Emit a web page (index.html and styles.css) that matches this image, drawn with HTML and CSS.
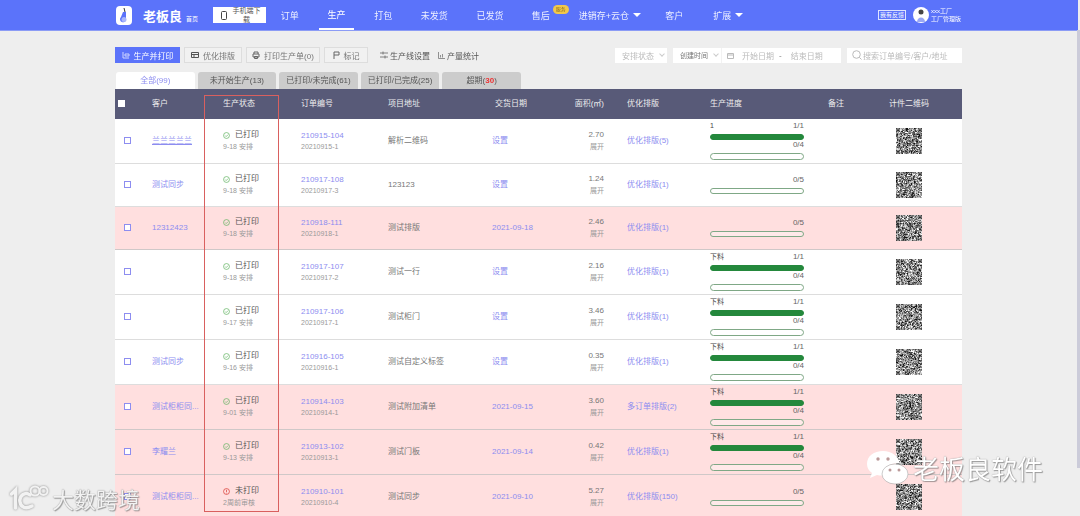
FILE: index.html
```html
<!DOCTYPE html>
<html lang="zh">
<head>
<meta charset="utf-8">
<title>老板良</title>
<link rel="stylesheet" href="styles.css">
</head>
<body>
<svg class="defs" width="0" height="0">
  <symbol id="ok" viewBox="0 0 10 10"><circle cx="5" cy="5" r="4.2" fill="none" stroke="#5fb25f"/><path d="M3 5l1.5 1.5L7.2 3.8" fill="none" stroke="#5fb25f"/></symbol>
  <symbol id="warn" viewBox="0 0 10 10"><circle cx="5" cy="5" r="4.2" fill="none" stroke="#d9362f"/><path d="M5 2.5v3.2M5 6.8v1" fill="none" stroke="#d9362f"/></symbol>
</svg>
<div class="app">
  <header class="nav">
    <div class="logo"><svg width="16" height="19" viewBox="0 0 16 19"><rect width="16" height="19" rx="4" fill="#fff"/><path d="M8 2l1 4-1 1" stroke="#333" fill="none"/><path d="M7 6h3v7a3 3 0 1 1-5-2" fill="#5b73fa"/><circle cx="8" cy="13.500" r="2.500" fill="#a9b6fb"/></svg></div>
    <span class="brand">老板良</span>
    <span class="home">首页</span>
    <div class="download"><svg width="6" height="9" viewBox="0 0 6 9"><rect x=".5" y=".5" width="5" height="8" rx="1" fill="none" stroke="#444"/></svg><span class="download-text">手机端下载</span></div>
    <nav class="menu">
      <a class="menu-item w-order">订单</a>
      <a class="menu-item active">生产</a>
      <a class="menu-item w-pack">打包</a>
      <a class="menu-item w-un">未发货</a>
      <a class="menu-item w-sent">已发货</a>
      <a class="menu-item w-after">售后<span class="badge">服务</span></a>
      <a class="menu-item w-store">进销存+云仓<i class="caret"></i></a>
      <a class="menu-item w-client">客户</a>
      <a class="menu-item w-ext">扩展<i class="caret"></i></a>
    </nav>
    <span class="feedback">我有反馈</span>
    <div class="avatar"><svg width="16" height="16" viewBox="0 0 16 16"><circle cx="8" cy="8" r="8" fill="#fff"/><circle cx="8" cy="5" r="2.500" fill="#444"/><path d="M4 15c0-6 8-6 8 0z" fill="#9aa8f5"/></svg></div>
    <div class="user"><span>xxx工厂</span><span>工厂管理版</span></div>
  </header>

  <main class="page">
    <div class="toolbar">
      <button class="tool primary w1"><svg width="8" height="8" viewBox="0 0 8 8"><path d="M1 1v6h6M3 3h4v2H3z" fill="none" stroke="#cfd6ff"/></svg>生产并打印</button>
      <button class="tool w2"><svg width="8" height="8" viewBox="0 0 8 8"><path d="M.5 1.500h7v5h-7zM.5 3.500h7M3 3.500v3" fill="none" stroke="#555"/></svg>优化排版</button>
      <button class="tool w3"><svg width="8" height="8" viewBox="0 0 8 8"><path d="M2 3V1h4v2M1 3h6v3H1zM2.500 5.500h3v2h-3z" fill="none" stroke="#666"/></svg>打印生产单(0)</button>
      <button class="tool w4"><svg width="7" height="8" viewBox="0 0 7 8"><path d="M1 8V1h5v3H1" fill="none" stroke="#666"/></svg>标记</button>
      <a class="tool-link l1"><svg width="8" height="8" viewBox="0 0 8 8"><path d="M0 2h8M0 6h8M3 .5v3M5 4.500v3" fill="none" stroke="#666" stroke-width=".8"/></svg>生产线设置</a>
      <a class="tool-link"><svg width="7" height="7" viewBox="0 0 7 7"><path d="M.5 0v6.500H7M2.500 3v2.500M4.500 2v3.500" fill="none" stroke="#777" stroke-width=".8"/></svg>产量统计</a>
      <div class="filters">
        <div class="field f-status">安排状态<i class="chev"></i></div>
        <div class="date-group">
          <div class="field f-time">创建时间<i class="chev"></i></div>
          <div class="field f-date"><svg width="7" height="7" viewBox="0 0 7 7"><path d="M.5 1.500h6v5h-6zM.5 3h6" fill="none" stroke="#bbb"/></svg><span>开始日期</span><b>-</b><span>结束日期</span></div>
        </div>
        <div class="field f-search"><svg width="10" height="10" viewBox="0 0 10 10"><circle cx="4.500" cy="4.500" r="3.800" fill="none" stroke="#bbb"/><path d="M7.300 7.300L9.500 9.500" stroke="#bbb"/></svg>搜索订单编号/客户/地址</div>
      </div>
    </div>

    <div class="tabs">
      <a class="tab current">全部(99)</a>
      <a class="tab">未开始生产(13)</a>
      <a class="tab">已打印/未完成(61)</a>
      <a class="tab">已打印/已完成(25)</a>
      <a class="tab">超期(<em>30</em>)</a>
    </div>

    <section class="table">
      <div class="row head">
        <div class="c-check"><i class="box solid"></i></div>
        <div>客户</div><div>生产状态</div><div>订单编号</div><div>项目地址</div><div class="h-date">交货日期</div>
        <div class="c-area">面积(㎡)</div><div class="c-plan">优化排版</div><div>生产进度</div><div class="c-center">备注</div><div class="c-qr">计件二维码</div>
      </div>

      <div class="row tall">
        <div class="c-check"><i class="box"></i></div><div class="link under">兰兰兰兰兰</div>
        <div><div class="st"><svg class="ico"><use href="#ok"/></svg>已打印</div><div class="sub">9-18 安排</div></div>
        <div><div class="no">210915-104</div><div class="sub num">20210915-1</div></div><div class="addr">解析二维码</div><div class="link">设置</div>
        <div class="c-area"><div class="amt">2.70</div><div class="sub">展开</div></div><div class="c-plan link">优化排版(5)</div>
        <div class="prog"><div class="lab"><span>1</span><span>1/1</span></div><div class="bar full"></div><div class="lab"><span></span><span>0/4</span></div><div class="bar"></div></div>
        <div></div><div class="c-qr"><div class="qr"></div></div>
      </div>

      <div class="row short">
        <div class="c-check"><i class="box"></i></div><div class="link">测试同步</div>
        <div><div class="st"><svg class="ico"><use href="#ok"/></svg>已打印</div><div class="sub">9-18 安排</div></div>
        <div><div class="no">210917-108</div><div class="sub num">20210917-3</div></div><div class="addr">123123</div><div class="link">设置</div>
        <div class="c-area"><div class="amt">1.24</div><div class="sub">展开</div></div><div class="c-plan link">优化排版(1)</div>
        <div class="prog"><div class="lab"><span></span><span>0/5</span></div><div class="bar"></div></div>
        <div></div><div class="c-qr"><div class="qr"></div></div>
      </div>

      <div class="row short late">
        <div class="c-check"><i class="box"></i></div><div class="link">12312423</div>
        <div><div class="st"><svg class="ico"><use href="#ok"/></svg>已打印</div><div class="sub">9-18 安排</div></div>
        <div><div class="no">210918-111</div><div class="sub num">20210918-1</div></div><div class="addr">测试排版</div><div class="link">2021-09-18</div>
        <div class="c-area"><div class="amt">2.46</div><div class="sub">展开</div></div><div class="c-plan link">优化排版(1)</div>
        <div class="prog"><div class="lab"><span></span><span>0/5</span></div><div class="bar"></div></div>
        <div></div><div class="c-qr"><div class="qr"></div></div>
      </div>

      <div class="row tall">
        <div class="c-check"><i class="box"></i></div><div class="link"></div>
        <div><div class="st"><svg class="ico"><use href="#ok"/></svg>已打印</div><div class="sub">9-18 安排</div></div>
        <div><div class="no">210917-107</div><div class="sub num">20210917-2</div></div><div class="addr">测试一行</div><div class="link">设置</div>
        <div class="c-area"><div class="amt">2.16</div><div class="sub">展开</div></div><div class="c-plan link">优化排版(1)</div>
        <div class="prog"><div class="lab"><span>下料</span><span>1/1</span></div><div class="bar full"></div><div class="lab"><span></span><span>0/4</span></div><div class="bar"></div></div>
        <div></div><div class="c-qr"><div class="qr"></div></div>
      </div>

      <div class="row tall">
        <div class="c-check"><i class="box"></i></div><div class="link"></div>
        <div><div class="st"><svg class="ico"><use href="#ok"/></svg>已打印</div><div class="sub">9-17 安排</div></div>
        <div><div class="no">210917-106</div><div class="sub num">20210917-1</div></div><div class="addr">测试柜门</div><div class="link">设置</div>
        <div class="c-area"><div class="amt">3.46</div><div class="sub">展开</div></div><div class="c-plan link">优化排版(1)</div>
        <div class="prog"><div class="lab"><span>下料</span><span>1/1</span></div><div class="bar full"></div><div class="lab"><span></span><span>0/4</span></div><div class="bar"></div></div>
        <div></div><div class="c-qr"><div class="qr"></div></div>
      </div>

      <div class="row tall">
        <div class="c-check"><i class="box"></i></div><div class="link">测试同步</div>
        <div><div class="st"><svg class="ico"><use href="#ok"/></svg>已打印</div><div class="sub">9-16 安排</div></div>
        <div><div class="no">210916-105</div><div class="sub num">20210916-1</div></div><div class="addr">测试自定义标签</div><div class="link">设置</div>
        <div class="c-area"><div class="amt">0.35</div><div class="sub">展开</div></div><div class="c-plan link">优化排版(1)</div>
        <div class="prog"><div class="lab"><span>下料</span><span>1/1</span></div><div class="bar full"></div><div class="lab"><span></span><span>0/4</span></div><div class="bar"></div></div>
        <div></div><div class="c-qr"><div class="qr"></div></div>
      </div>

      <div class="row tall late">
        <div class="c-check"><i class="box"></i></div><div class="link">测试柜柜同...</div>
        <div><div class="st"><svg class="ico"><use href="#ok"/></svg>已打印</div><div class="sub">9-01 安排</div></div>
        <div><div class="no">210914-103</div><div class="sub num">20210914-1</div></div><div class="addr">测试附加清单</div><div class="link">2021-09-15</div>
        <div class="c-area"><div class="amt">3.60</div><div class="sub">展开</div></div><div class="c-plan link">多订单排版(2)</div>
        <div class="prog"><div class="lab"><span>下料</span><span>1/1</span></div><div class="bar full"></div><div class="lab"><span></span><span>0/4</span></div><div class="bar"></div></div>
        <div></div><div class="c-qr"><div class="qr"></div></div>
      </div>

      <div class="row tall late">
        <div class="c-check"><i class="box"></i></div><div class="link">李耀兰</div>
        <div><div class="st"><svg class="ico"><use href="#ok"/></svg>已打印</div><div class="sub">9-13 安排</div></div>
        <div><div class="no">210913-102</div><div class="sub num">20210913-1</div></div><div class="addr">测试门板</div><div class="link">2021-09-14</div>
        <div class="c-area"><div class="amt">0.42</div><div class="sub">展开</div></div><div class="c-plan link">优化排版(1)</div>
        <div class="prog"><div class="lab"><span>下料</span><span>1/1</span></div><div class="bar full"></div><div class="lab"><span></span><span>0/4</span></div><div class="bar"></div></div>
        <div></div><div class="c-qr"><div class="qr"></div></div>
      </div>

      <div class="row tall late">
        <div class="c-check"><i class="box"></i></div><div class="link">测试柜柜同...</div>
        <div><div class="st"><svg class="ico"><use href="#warn"/></svg>未打印</div><div class="sub">2周前审核</div></div>
        <div><div class="no">210910-101</div><div class="sub num">20210910-4</div></div><div class="addr">测试同步</div><div class="link">2021-09-10</div>
        <div class="c-area"><div class="amt">5.27</div><div class="sub">展开</div></div><div class="c-plan link">优化排版(150)</div>
        <div class="prog"><div class="lab"><span></span><span>0/5</span></div><div class="bar"></div></div>
        <div></div><div class="c-qr"><div class="qr"></div></div>
      </div>

      <div class="marker"></div>
    </section>
  </main>

  <div class="scrollbar"></div>

  <div class="mark mark-left">
    <svg width="40" height="28" viewBox="0 0 40 28"><g fill="none" stroke="#f2f2f2" stroke-width="3.500" stroke-linecap="round"><path d="M2.500 10l4-4v18"/><path d="M21 11c-5-4-11 1-10 7s6 7 12 4"/></g><g fill="none" stroke="#f2f2f2" stroke-width="2"><circle cx="26" cy="7" r="4.500"/><circle cx="34.500" cy="7" r="4"/></g></svg>
    <span>大数跨境</span>
  </div>
  <div class="mark mark-right">
    <svg width="44" height="36" viewBox="0 0 44 36"><path d="M17 1C8 1 1 6 1 14c0 4 2 7 5 9l-2 5 7-3c2 .5 3 .5 5 .5 1-8 8-13 18-12C32 6 26 1 17 1z" fill="#fff"/><ellipse cx="29" cy="24" rx="13" ry="10" fill="#fff" stroke="#aaa" stroke-width=".6"/><circle cx="12" cy="9" r="1.700" fill="#b99"/><circle cx="22" cy="9" r="1.700" fill="#b99"/><circle cx="24" cy="20" r="1.500" fill="#b99"/><circle cx="33" cy="20" r="1.500" fill="#b99"/></svg>
    <span>老板良软件</span>
  </div>
</div>
<script src="qr.js"></script>
</body>
</html>
```
FILE: styles.css
```css
* { box-sizing: border-box; }
html, body { margin: 0; height: 516px; overflow: hidden; }
body {
  background: #eee;
  font-family: "Liberation Sans", "Noto Sans CJK SC", sans-serif;
  color: #555;
  font-size: 8px;
}
.defs { position: absolute; }
.app { position: relative; height: 516px; overflow: hidden; filter: blur(.35px); }

/* nav */
.nav {
  height: 31px;
  width: 1078px;
  background: #5b73fa;
  border-bottom: 1px solid #8b9bf5;
  display: flex;
  align-items: center;
  padding: 0 116px;
  color: #fff;
}
.logo { width: 16px; height: 19px; }
.logo svg { display: block; }
.brand { margin-left: 11px; font-size: 13px; font-weight: 700; width: 38px; white-space: nowrap; }
.home { margin-left: 5px; font-size: 6px; width: 12px; margin-top: 6px; white-space: nowrap; }
.download {
  margin-left: 15px;
  width: 53px;
  height: 16px;
  background: #fff;
  display: flex;
  align-items: center;
  padding-left: 8px;
  gap: 5px;
  color: #555;
}
.download-text { width: 29px; font-size: 7px; line-height: 9px; text-align: center; margin-top: -1px; }
.menu { display: flex; height: 30px; margin-left: 6px; width: 472px; flex: none; }
.menu-item {
  position: relative;
  display: flex;
  align-items: center;
  justify-content: center;
  height: 30px;
  font-size: 9px;
  color: #eef0ff;
  white-space: nowrap;
}
.menu-item:first-child { width: 36px; margin-left: 0; }
.active { width: 36px; margin-left: 11px; border-bottom: 2px solid #fff; color: #fff; }
.w-pack { width: 18px; margin-left: 20px; }
.w-un { width: 28px; margin-left: 28px; }
.w-sent { width: 28px; margin-left: 28px; }
.w-after { width: 18px; margin-left: 28px; }
.w-store { width: 64px; margin-left: 29px; justify-content: flex-start; }
.w-client { width: 18px; margin-left: 23px; }
.w-ext { width: 31px; margin-left: 30px; justify-content: flex-start; }
.caret {
  margin-left: 4px;
  border-left: 4px solid transparent;
  border-right: 4px solid transparent;
  border-top: 4px solid #fff;
}
.badge {
  position: absolute;
  left: 21px;
  top: 5px;
  width: 16px;
  height: 9px;
  border-radius: 5px;
  background: #f2c84b;
  color: #8a6d1d;
  font-size: 5px;
  line-height: 9px;
  text-align: center;
}
.feedback {
  margin-left: auto;
  width: 28px;
  height: 10px;
  border: 1px solid #dfe4ff;
  font-size: 6px;
  line-height: 8px;
  text-align: center;
  white-space: nowrap;
}
.avatar { margin-left: 7px; height: 16px; }
.avatar svg { display: block; }
.user { margin-left: 2px; width: 31px; display: flex; flex-direction: column; font-size: 6px; line-height: 8px; white-space: nowrap; }

/* page */
.page { padding-left: 115px; width: 962px; }
.toolbar { display: flex; align-items: center; height: 16px; margin-top: 16px; }
.tool {
  height: 16px;
  padding: 0;
  border: 1px solid #ddd;
  background: #f1f1f1;
  color: #777;
  font: inherit;
  font-size: 8px;
  display: flex;
  align-items: center;
  justify-content: center;
  gap: 4px;
  margin-right: 4px;
  white-space: nowrap;
}
.primary { background: #5b73fa; border-color: #5b73fa; color: #fff; }
.w1 { width: 65px; }
.w2 { width: 58px; }
.w3 { width: 74px; }
.w4 { width: 44px; margin-right: 12px; }
.tool-link { display: flex; align-items: center; gap: 2px; font-size: 8px; color: #555; margin-right: 8px; white-space: nowrap; }
.filters { display: flex; gap: 6px; margin-left: auto; }
.field {
  height: 15px;
  background: #fff;
  color: #bbb;
  display: flex;
  align-items: center;
  font-size: 8px;
  white-space: nowrap;
}
.f-status { width: 52px; padding-left: 7px; }
.date-group { display: flex; }
.f-time { width: 48px; padding-left: 7px; color: #777; font-size: 7px; }
.f-date { width: 120px; padding-left: 5px; gap: 0; border-left: 1px solid #f2f2f2; }
.f-date span:first-of-type { margin-left: 8px; width: 28px; }
.f-date b { font-weight: 400; margin: 0 9px; color: #777; }
.f-search { width: 115px; padding-left: 5px; gap: 1px; }
.chev {
  width: 4px;
  height: 4px;
  margin: -2px 0 0 6px;
  border-right: 1px solid #ccc;
  border-bottom: 1px solid #ccc;
  transform: rotate(45deg);
}

/* tabs */
.tabs { display: flex; gap: 3px; margin-top: 9px; height: 17px; padding-left: 1px; }
.tab {
  width: 78.600px;
  height: 17px;
  background: #ccc;
  border-radius: 3px 3px 0 0;
  text-align: center;
  font-size: 8px;
  line-height: 17px;
  color: #555;
  white-space: nowrap;
}
.tab em { font-style: normal; font-weight: 700; color: #e33; }
.current { background: #fff; color: #8d8df0; }

/* table */
.table { position: relative; width: 847px; }
.row {
  display: grid;
  grid-template-columns: 37px 71px 78px 87px 104px 78px 34px 106px 94px 64px 94px;
  align-items: center;
  background: #fff;
  border-bottom: 1.500px solid #ddd;
  font-size: 8px;
  line-height: 11px;
}
.head {
  height: 29.500px;
  background: #585a78;
  color: #eee;
  border-bottom: 0;
}
.tall { height: 45px; }
.short { height: 43px; }
.late { background: #ffdfdf; border-bottom-color: #cfc8c8; }
.c-check { padding-left: 9px; display: flex; }
.head .c-check { padding-left: 3px; }
.box { width: 7px; height: 7px; border: 1px solid #8d8df0; background: #fff; }
.solid { border-color: #fff; }
.h-date { padding-left: 3px; }
.c-area { text-align: right; white-space: nowrap; justify-self: end; }
.c-plan { padding-left: 23px; }
.c-center { text-align: center; }
.c-qr { text-align: center; padding-right: 12px; display: flex; justify-content: center; }
.link { color: #8d8df0; white-space: nowrap; }
.under { text-decoration: underline; }
.st { display: flex; align-items: center; color: #555; line-height: 12px; }
.ico { width: 7px; height: 7px; margin-right: 5px; }
.sub { color: #999; font-size: 7px; line-height: 11px; white-space: nowrap; }
.no { color: #8d8df0; font-size: 8px; line-height: 11px; }
.num { line-height: 11px; }
.addr { color: #777; white-space: nowrap; }
.amt { color: #777; line-height: 12px; }
.prog { display: flex; flex-direction: column; }
.lab { display: flex; justify-content: space-between; height: 10px; line-height: 10px; font-size: 8px; color: #666; }
.lab span:first-child { font-size: 7px; color: #444; }
.bar { height: 6.500px; margin-top: 2.500px; border: 1px solid #7fa886; border-radius: 4px; background: #fff; }
.late .bar { background: #ffe9e9; }
.full { background: #24883c !important; border-color: #24883c; }
.prog .bar:last-child { margin-top: 3px; }
.qr { width: 26px; height: 26px; background: #555; }
.qr svg { display: block; }

.marker {
  position: absolute;
  left: 89px;
  top: 6px;
  width: 75px;
  height: 417px;
  border: 1px solid #d9605f;
  pointer-events: none;
}

.scrollbar {
  position: absolute;
  top: 30px;
  right: 0;
  width: 3px;
  height: 438px;
  background: #cbcbd9;
}

/* watermarks */
.mark {
  position: absolute;
  display: flex;
  align-items: center;
  color: #fff;
  text-shadow: 0 0 1px #777, 1px 1px 1px rgba(80,80,80,.5);
  white-space: nowrap;
}
.mark-left { left: 9px; top: 482px; font-size: 22px; gap: 3px; color: #f2f2f2; }
.mark-left svg { filter: drop-shadow(0 0 1px #888); }
.mark-right { left: 866px; top: 449px; font-size: 26px; gap: 3px; }
```
FILE: qr.js
```js
// Fills every .qr block with a pseudo-random two-tone code matrix.
(function () {
  var seed = 7;
  function rnd() {
    seed = (seed * 16807) % 2147483647;
    return seed / 2147483647;
  }
  var n = 45;
  document.querySelectorAll('.qr').forEach(function (el) {
    var d = '';
    for (var r = 0; r < n; r++) {
      for (var c = 0; c < n; c++) {
        var inTL = r < 8 && c < 8, inTR = r < 8 && c >= n - 8, inBL = r >= n - 8 && c < 8;
        var on;
        if (inTL || inTR || inBL) {
          var x = inTR ? c - (n - 7) : c, y = inBL ? r - (n - 7) : r;
          var edge = x === 0 || x === 6 || y === 0 || y === 6;
          var core = x >= 2 && x <= 4 && y >= 2 && y <= 4;
          on = x >= 0 && y >= 0 && x < 7 && y < 7 && (edge || core);
        } else {
          on = rnd() > 0.5;
        }
        if (on) d += 'M' + c + ' ' + r + 'h1v1h-1z';
      }
    }
    el.style.background = '#fff';
    el.innerHTML = '<svg width="26" height="26" viewBox="0 0 ' + n + ' ' + n + '"><path fill="#111" d="' + d + '"/></svg>';
  });
})();
```
